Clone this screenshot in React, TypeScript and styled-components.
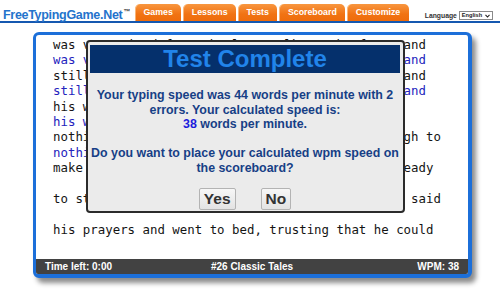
import React from 'react';
import styled, { createGlobalStyle } from 'styled-components';

const Global = createGlobalStyle`
  html, body { margin: 0; padding: 0; background: #fff; }
  body {
    font-family: "Liberation Sans", Arial, sans-serif;
    width: 500px;
    height: 292px;
    overflow: hidden;
  }
`;

const Header = styled.header`
  display: flex;
  align-items: flex-end;
  height: 21px;
  border-bottom: 2px solid #1558b0;
  padding-left: 3px;
`;

const Logo = styled.div`
  align-self: flex-start;
  padding-top: 4px;
  width: 132px;
  font: bold 12.5px/15px "Liberation Sans", Arial, sans-serif;
  letter-spacing: -0.3px;
  color: #2473cc;
  white-space: nowrap;
`;

const Trademark = styled.span`
  font-size: 7px;
  vertical-align: 5px;
  margin-left: 1px;
  color: #333;
`;

const Tabs = styled.nav`
  display: flex;
  align-items: flex-end;
  gap: 2px;
`;

const Tab = styled.a`
  display: block;
  height: 17px;
  padding: 0 8.5px;
  font: bold 8.8px/17px "Liberation Sans", Arial, sans-serif;
  color: #fff;
  text-decoration: none;
  border-radius: 5px 5px 0 0;
  background: linear-gradient(#f8963f, #f17313 60%, #ee6c0c);
  box-shadow: inset 1px 0 0 rgba(255, 220, 180, 0.6);
`;

const Lang = styled.div`
  display: flex;
  align-items: center;
  gap: 2px;
  margin-left: 16px;
  margin-bottom: 1px;
`;

const LangLabel = styled.span`
  font: bold 6.8px/9px "Liberation Sans", Arial, sans-serif;
  color: #333;
`;

const FakeSelect = styled.span`
  display: flex;
  align-items: center;
  gap: 3px;
  height: 9px;
  box-sizing: border-box;
  padding: 0 2px;
  border: 1px solid #8a8a8a;
  background: #fff;
  font: bold 5.6px/7px "Liberation Sans", Arial, sans-serif;
  color: #222;
`;

const Board = styled.section`
  position: relative;
  margin: 9px 0 0 33px;
  width: 439px;
  box-sizing: border-box;
  border: 3px solid #1c6fd9;
  border-right-width: 4px;
  border-bottom-width: 4px;
  border-radius: 6px;
  background: #fff;
  box-shadow: 4px 5px 5px rgba(0, 0, 0, 0.45);
  overflow: hidden;
`;

const TextArea = styled.div`
  height: 224px;
  box-sizing: border-box;
  padding: 2px 0 0 17px;
  font: 12.4px/15.4px "DejaVu Sans Mono", "Liberation Mono", monospace;
  white-space: pre;
`;

const Line = styled.div<{ $typed?: boolean }>`
  height: 15.4px;
  color: ${(p) => (p.$typed ? '#2323bd' : '#141414')};
`;

const Footer = styled.footer`
  display: grid;
  grid-template-columns: 1fr auto 1fr;
  background: #424242;
  color: #fff;
  font: bold 10px/15px "Liberation Sans", Arial, sans-serif;
  padding: 0 9px;
`;

const FootCell = styled.span<{ $align: 'left' | 'center' | 'right' }>`
  text-align: ${(p) => p.$align};
`;

const Modal = styled.div`
  position: absolute;
  left: 50px;
  top: 5px;
  width: 319px;
  height: 173px;
  box-sizing: border-box;
  border: 2px solid #2b2b2b;
  border-radius: 4px;
  background: #ebebeb;
  padding: 3px 3px 0 2px;
  display: flex;
  flex-direction: column;
  align-items: stretch;
`;

const Title = styled.h1`
  margin: 0;
  height: 28px;
  background: #05306c;
  color: #2184ea;
  font: bold 24px/28px "Liberation Sans", Arial, sans-serif;
  text-align: center;
`;

const Message = styled.p`
  margin: 14.5px 0 0;
  font: bold 12.4px/14.5px "Liberation Sans", Arial, sans-serif;
  color: #173f86;
  text-align: center;
  white-space: nowrap;
  &:first-of-type { margin-top: 15px; }
`;

const Speed = styled.span`
  color: #1c1cdc;
`;

const Buttons = styled.div`
  display: flex;
  justify-content: center;
  gap: 25px;
  margin-top: 13px;
`;

const Button = styled.button`
  height: 22px;
  box-sizing: border-box;
  padding: 0 4px;
  border: 1px solid #b3b3b3;
  border-radius: 2px;
  background: linear-gradient(#f7f7f7, #e3e3e3);
  color: #333;
  font: bold 15.5px/20px "Liberation Sans", Arial, sans-serif;
  cursor: pointer;
`;

const lines: { t: string; typed?: boolean }[] = [
  { t: 'was very tired from the long walk to the farms and' },
  { t: 'was very tired from the long walk to the farms and', typed: true },
  { t: 'still he had to feed the hens and milk the cow and' },
  { t: 'still he had to feed the hens and milk the cow and', typed: true },
  { t: 'his wife was waiting with supper by the fire,' },
  { t: 'his wife was waiting with supper by the fire,', typed: true },
  { t: 'nothing in the whole world could seem good enough to' },
  { t: 'nothing in the whole world', typed: true },
  { t: 'make him happier than his warm bed, so he got ready' },
  { t: '', typed: true },
  { t: 'to start his rest. He knelt down at his bed and said' },
  { t: '', typed: true },
  { t: 'his prayers and went to bed, trusting that he could' },
];

const tabs = ['Games', 'Lessons', 'Tests', 'Scoreboard', 'Customize'];

export default function App() {
  return (
    <>
      <Global />
      <Header>
        <Logo>
          FreeTypingGame.Net<Trademark>™</Trademark>
        </Logo>
        <Tabs>
          {tabs.map((t) => (
            <Tab key={t} href="#">
              {t}
            </Tab>
          ))}
        </Tabs>
        <Lang>
          <LangLabel>Language</LangLabel>
          <FakeSelect>
            English
            <svg width="5" height="4" viewBox="0 0 5 4">
              <path d="M0.5 0.8 L2.5 3 L4.5 0.8" fill="none" stroke="#222" strokeWidth="1.1" />
            </svg>
          </FakeSelect>
        </Lang>
      </Header>
      <Board>
        <TextArea>
          {lines.map((l, i) => (
            <Line key={i} $typed={l.typed}>
              {l.t || '\u00a0'}
            </Line>
          ))}
        </TextArea>
        <Footer>
          <FootCell $align="left">Time left: 0:00</FootCell>
          <FootCell $align="center">#26 Classic Tales</FootCell>
          <FootCell $align="right">WPM: 38</FootCell>
        </Footer>
        <Modal>
          <Title>Test Complete</Title>
          <Message>
            Your typing speed was 44 words per minute with 2
            <br />
            errors. Your calculated speed is:
            <br />
            <Speed>38</Speed> words per minute.
          </Message>
          <Message>
            Do you want to place your calculated wpm speed on
            <br />
            the scoreboard?
          </Message>
          <Buttons>
            <Button>Yes</Button>
            <Button>No</Button>
          </Buttons>
        </Modal>
      </Board>
    </>
  );
}
